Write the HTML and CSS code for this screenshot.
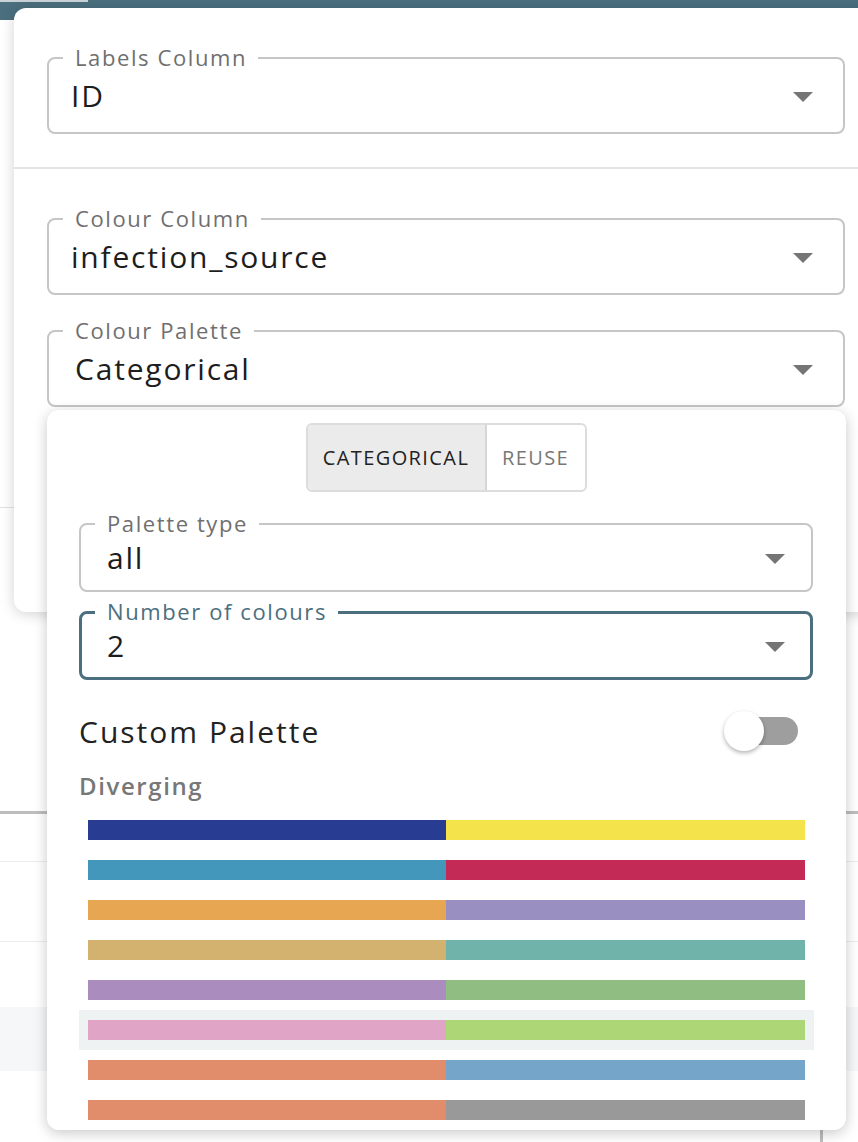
FILE: index.html
```html
<!DOCTYPE html>
<html>
<head>
<meta charset="utf-8">
<link rel="stylesheet" href="styles.css">
</head>
<body>
<div class="topbar"><div class="tab"></div></div>
<div class="backdrop">
  <div class="bg-row r1"></div>
  <div class="bg-row r2"></div>
  <div class="bg-row r3"></div>
  <div class="bg-row r4"></div>
  <div class="bg-row r5"></div>
  <div class="bg-row r6"></div>
  <div class="bg-scroll"></div>
</div>

<div class="card">
  <div class="field">
    <span class="label">Labels Column</span>
    <span class="value">ID</span>
    <span class="arrow"></span>
  </div>
  <div class="divider"></div>
  <div class="field f2">
    <span class="label">Colour Column</span>
    <span class="value">infection_source</span>
    <span class="arrow"></span>
  </div>
  <div class="field f3">
    <span class="label">Colour Palette</span>
    <span class="value v3">Categorical</span>
    <span class="arrow"></span>
  </div>
</div>

<div class="popup">
  <div class="btn-group">
    <span class="btn active">CATEGORICAL</span>
    <span class="btn">REUSE</span>
  </div>
  <div class="field pf">
    <span class="label">Palette type</span>
    <span class="value">all</span>
    <span class="arrow"></span>
  </div>
  <div class="field pf focused">
    <span class="label">Number of colours</span>
    <span class="value">2</span>
    <span class="arrow"></span>
  </div>
  <div class="custom-row">
    <span class="custom-text">Custom Palette</span>
    <span class="switch"><span class="track"></span><span class="thumb"></span></span>
  </div>
  <div class="section">Diverging</div>
  <div class="palettes">
    <div class="pal"><span style="background:#283d91"></span><span style="background:#f4e34a"></span></div>
    <div class="pal"><span style="background:#4397bb"></span><span style="background:#c32b56"></span></div>
    <div class="pal"><span style="background:#e6a652"></span><span style="background:#9990c1"></span></div>
    <div class="pal"><span style="background:#d3b26f"></span><span style="background:#6fb3aa"></span></div>
    <div class="pal"><span style="background:#ab8cbf"></span><span style="background:#8fbd82"></span></div>
    <div class="pal hover"><span style="background:#dfa4c6"></span><span style="background:#add677"></span></div>
    <div class="pal"><span style="background:#e18c6b"></span><span style="background:#75a6c9"></span></div>
    <div class="pal"><span style="background:#e18c6b"></span><span style="background:#999999"></span></div>
  </div>
</div>
</body>
</html>
```

FILE: styles.css
```css
* { box-sizing: border-box; }
html, body { margin: 0; padding: 0; }
body {
  width: 858px;
  height: 1142px;
  overflow: hidden;
  background: #ffffff;
  font-family: "Open Sans", "Liberation Sans", sans-serif;
  color: #212121;
  position: relative;
}
.topbar {
  height: 20px;
  background: #4b6f7e;
  position: relative;
}
.tab {
  width: 88px;
  height: 2px;
  background: #c9d3d8;
}
.backdrop {
  height: 1122px;
  position: relative;
  background: #ffffff;
}
.bg-row { width: 100%; }
.r1 { height: 488px; border-bottom: 1px solid #e2e2e2; }
.r2 { height: 306px; border-bottom: 3px solid #bdbdbd; }
.r3 { height: 48px; border-bottom: 1px solid #ececec; }
.r4 { height: 80px; border-bottom: 1px solid #ececec; }
.r5 { height: 65px; }
.r6 { height: 64px; background: #f6f7f8; }
.bg-scroll {
  position: absolute;
  left: 820px;
  top: 1090px;
  width: 3px;
  height: 40px;
  background: #bdbdbd;
}

.card {
  position: absolute;
  top: 8px;
  left: 14px;
  width: 860px;
  height: 604px;
  background: #fff;
  border-radius: 12px 0 0 12px;
  box-shadow: 0 2px 14px rgba(0,0,0,0.18);
  padding: 49px 0 0 33px;
}
.field {
  position: relative;
  width: 798px;
  height: 77px;
  border: 2px solid #c6c6c6;
  border-radius: 8px;
  display: flex;
  align-items: center;
  padding-left: 22px;
}
.label {
  position: absolute;
  top: -17px;
  left: 14px;
  padding: 0 11px 0 12px;
  background: #fff;
  font-size: 22px;
  line-height: 30px;
  color: #6f6f6f;
  letter-spacing: 1.6px;
}
.value {
  font-size: 30px;
  line-height: 38px;
  color: #1d1d1d;
  letter-spacing: 1.8px;
  margin-top: 1px;
}
.v3 { padding-left: 4px; }
.arrow {
  position: absolute;
  right: 30px;
  top: 33px;
  width: 0;
  height: 0;
  border-left: 10px solid transparent;
  border-right: 10px solid transparent;
  border-top: 10px solid #757575;
}
.divider {
  height: 2px;
  background: #e4e4e4;
  margin: 33px 0 0 -33px;
}
.f2 { margin-top: 49px; }
.f3 { margin-top: 35px; }

.popup {
  position: absolute;
  top: 410px;
  left: 47px;
  width: 799px;
  height: 720px;
  background: #fff;
  border-radius: 12px;
  box-shadow: 0 3px 14px rgba(0,0,0,0.22);
  padding: 13px 33px 0 32px;
  overflow: hidden;
}
.btn-group {
  display: flex;
  width: 281px;
  height: 69px;
  margin: 0 auto;
  border: 2px solid #dcdcdc;
  border-radius: 6px;
  overflow: hidden;
}
.btn {
  display: flex;
  align-items: center;
  justify-content: center;
  font-size: 20px;
  font-weight: 500;
  color: #777;
  letter-spacing: 1.4px;
  flex: 1;
}
.btn.active {
  flex: 0 0 179px;
  background: #ebebeb;
  color: #222;
  border-right: 2px solid #d6d6d6;
}
.pf {
  width: 734px;
  height: 69px;
  margin-top: 31px;
  padding-left: 26px;
}
.pf .arrow { right: 26px; top: 29px; }
.pf + .pf { margin-top: 19px; }
.focused {
  border: 3px solid #4b6f7e;
  padding-left: 25px;
}
.focused .label { color: #4b6f7e; top: -18px; left: 13px; }
.focused .arrow { right: 25px; top: 28px; }

.custom-row {
  display: flex;
  align-items: center;
  justify-content: space-between;
  height: 50px;
  margin-top: 26px;
  padding-right: 15px;
}
.custom-text {
  font-size: 30px;
  letter-spacing: 2px;
  color: #222;
}
.switch {
  position: relative;
  width: 74px;
  height: 40px;
}
.track {
  position: absolute;
  left: 6px;
  top: 6px;
  width: 68px;
  height: 28px;
  background: #9e9e9e;
  border-radius: 14px;
}
.thumb {
  position: absolute;
  left: 0;
  top: 0;
  width: 40px;
  height: 40px;
  border-radius: 50%;
  background: #fff;
  box-shadow: 0 2px 4px rgba(0,0,0,0.3);
}
.section {
  margin-top: 15px;
  height: 30px;
  line-height: 30px;
  font-size: 24px;
  font-weight: 600;
  color: #777;
  letter-spacing: 1.6px;
}
.palettes { margin-top: 9px; }
.pal {
  display: flex;
  height: 40px;
  padding: 10px 9px;
  width: 735px;
}
.pal span { height: 20px; }
.pal span:first-child { width: 358px; }
.pal span:last-child { flex: 1; }
.pal.hover { background: #eff2f3; }
```
